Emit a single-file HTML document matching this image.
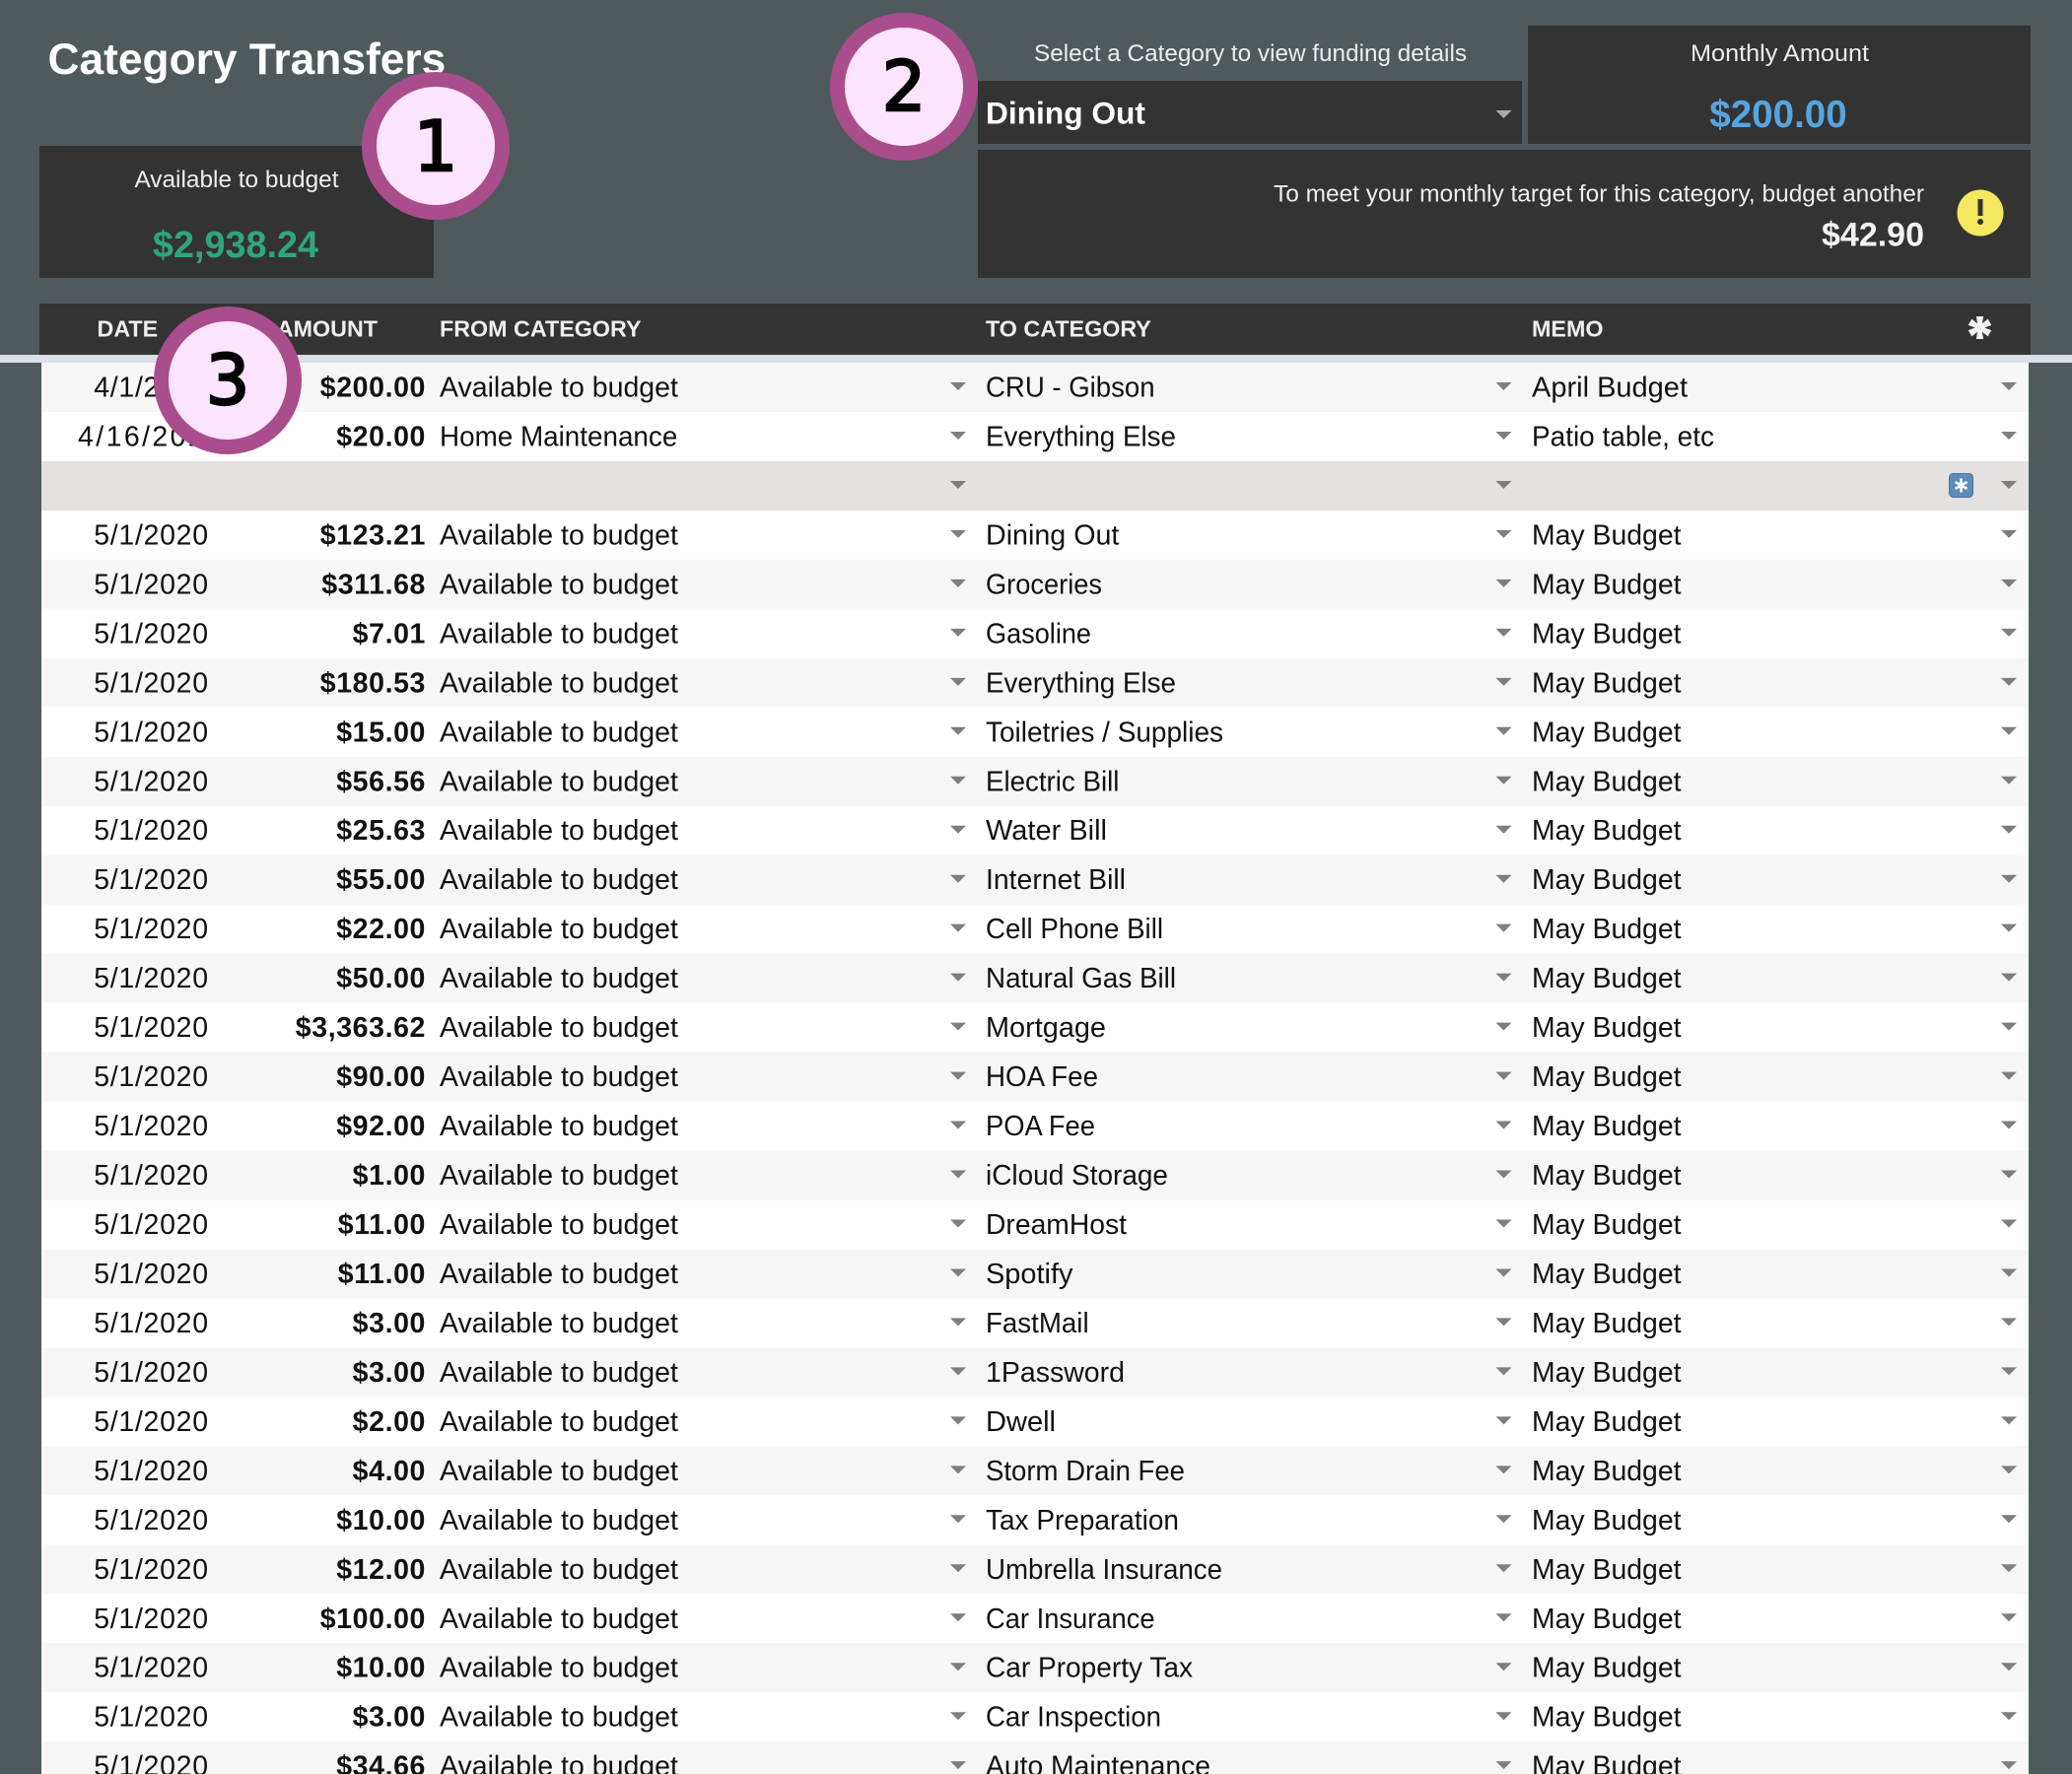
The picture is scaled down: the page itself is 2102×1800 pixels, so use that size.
<!DOCTYPE html>
<html><head><meta charset="utf-8"><title>Category Transfers</title>
<style>
html,body{margin:0;padding:0;background:#505a5d;width:2102px;height:1800px;overflow:hidden}
svg{display:block}
text{font-family:"Liberation Sans",sans-serif}
.d{font-size:28.5px;fill:#111;text-anchor:middle;letter-spacing:.7px}
.a{font-size:28.5px;fill:#111;font-weight:700;text-anchor:end;letter-spacing:.6px}
.c{font-size:28.5px;fill:#111}
.h{font-size:23.3px;fill:#eee;font-weight:700}
.l{font-size:24.4px;fill:#eee}
text.n{font-family:"DejaVu Sans",sans-serif;font-size:70px;fill:#000;stroke:#000;stroke-width:2.4px;text-anchor:middle}
</style></head><body>
<svg xmlns="http://www.w3.org/2000/svg" width="2102" height="1800" viewBox="0 0 2102 1800">
<defs>
<g id="r"><path d="M964 20h16l-8 8zM1517.500 20h16l-8 8zM2030 20h16l-8 8z" fill="#807e7c"/></g>
<path id="s" d="M-1.800 0L-3.600-11.500H3.600L1.800 0z" fill="#f2f2f2"/>
</defs>
<rect width="2102" height="1800" fill="#505a5d"/>
<text x="48.500" y="75" font-size="44.300" font-weight="700" fill="#fff">Category Transfers</text>
<rect x="40" y="148" width="400" height="134" fill="#333"/>
<text x="240" y="190" class="l" text-anchor="middle">Available to budget</text>
<text x="239" y="261" font-size="37.800" font-weight="700" fill="#2fa67c" text-anchor="middle">$2,938.24</text>
<text x="1049" y="62" class="l" textLength="439" lengthAdjust="spacingAndGlyphs">Select a Category to view funding details</text>
<rect x="992" y="82" width="552" height="64" fill="#333"/>
<text x="1000" y="125.500" font-size="31.700" font-weight="700" fill="#fff">Dining Out</text>
<path d="M1517.500 112h16l-8 8z" fill="#aaa"/>
<rect x="1550" y="26" width="510" height="120" fill="#333"/>
<text x="1715" y="62" class="l" textLength="181" lengthAdjust="spacingAndGlyphs">Monthly Amount</text>
<text x="1804" y="129" font-size="38.600" font-weight="700" fill="#55a5e0" text-anchor="middle">$200.00</text>
<rect x="992" y="152" width="1068" height="130" fill="#333"/>
<text x="1292" y="204.500" class="l" textLength="660" lengthAdjust="spacingAndGlyphs">To meet your monthly target for this category, budget another</text>
<text x="1952" y="249.500" font-size="34" font-weight="700" fill="#f2f2f2" text-anchor="end">$42.90</text>
<circle cx="2009" cy="216" r="23.500" fill="#f3e85f"/>
<path d="M2006.500 202h5v17h-5z" fill="#333"/><circle cx="2009" cy="225" r="3" fill="#333"/>
<rect x="40" y="308" width="2020" height="52" fill="#333"/>
<text x="98.500" y="341.500" class="h">DATE</text>
<text x="383" y="341.500" class="h" text-anchor="end">AMOUNT</text>
<text x="446" y="341.500" class="h">FROM CATEGORY</text>
<text x="1000" y="341.500" class="h">TO CATEGORY</text>
<text x="1554" y="341.500" class="h">MEMO</text>
<g transform="translate(2008.500,332.500)"><use href="#s"/><use href="#s" transform="rotate(60)"/><use href="#s" transform="rotate(120)"/><use href="#s" transform="rotate(180)"/><use href="#s" transform="rotate(240)"/><use href="#s" transform="rotate(300)"/></g>
<rect x="0" y="360" width="2102" height="8" fill="#dbdfe8"/>
<rect x="42" y="368" width="2016" height="1432" fill="#fff"/>

<g transform="translate(0,368)"><rect x="42" width="2016" height="50" fill="#f6f6f6"/><use href="#r"/><text x="153.500" y="34.500" class="d">4/1/2020</text><text x="432" y="34.500" class="a">$200.00</text><text x="446" y="34.500" class="c">Available to budget</text><text x="1000" y="34.500" class="c" textLength="171.600" lengthAdjust="spacingAndGlyphs">CRU - Gibson</text><text x="1554" y="34.500" class="c" textLength="158" lengthAdjust="spacingAndGlyphs">April Budget</text></g>
<g transform="translate(0,417.970)"><use href="#r"/><text x="79" y="34.500" class="d" style="text-anchor:start;letter-spacing:2.400px">4/16/2020</text><text x="432" y="34.500" class="a">$20.00</text><text x="446" y="34.500" class="c" textLength="241.300" lengthAdjust="spacingAndGlyphs">Home Maintenance</text><text x="1000" y="34.500" class="c" textLength="193" lengthAdjust="spacingAndGlyphs">Everything Else</text><text x="1554" y="34.500" class="c" textLength="185" lengthAdjust="spacingAndGlyphs">Patio table, etc</text></g>
<g transform="translate(0,467.940)"><rect x="42" width="2016" height="50" fill="#e3e2e0"/><use href="#r"/><rect x="1977.500" y="12.500" width="24" height="24" rx="4" fill="#5d8cb8" stroke="#4a7299"/><path d="M1989.500 17.500v14M1983.500 21l12 7M1983.500 28l12-7" stroke="#fff" stroke-width="2.600" fill="none"/></g>
<g transform="translate(0,517.910)"><use href="#r"/><text x="153.500" y="34.500" class="d">5/1/2020</text><text x="432" y="34.500" class="a">$123.21</text><text x="446" y="34.500" class="c">Available to budget</text><text x="1000" y="34.500" class="c" textLength="135.400" lengthAdjust="spacingAndGlyphs">Dining Out</text><text x="1554" y="34.500" class="c" textLength="151.500" lengthAdjust="spacingAndGlyphs">May Budget</text></g>
<g transform="translate(0,567.880)"><rect x="42" width="2016" height="50" fill="#f6f6f6"/><use href="#r"/><text x="153.500" y="34.500" class="d">5/1/2020</text><text x="432" y="34.500" class="a">$311.68</text><text x="446" y="34.500" class="c">Available to budget</text><text x="1000" y="34.500" class="c" textLength="118" lengthAdjust="spacingAndGlyphs">Groceries</text><text x="1554" y="34.500" class="c" textLength="151.500" lengthAdjust="spacingAndGlyphs">May Budget</text></g>
<g transform="translate(0,617.850)"><use href="#r"/><text x="153.500" y="34.500" class="d">5/1/2020</text><text x="432" y="34.500" class="a">$7.01</text><text x="446" y="34.500" class="c">Available to budget</text><text x="1000" y="34.500" class="c" textLength="107" lengthAdjust="spacingAndGlyphs">Gasoline</text><text x="1554" y="34.500" class="c" textLength="151.500" lengthAdjust="spacingAndGlyphs">May Budget</text></g>
<g transform="translate(0,667.820)"><rect x="42" width="2016" height="50" fill="#f6f6f6"/><use href="#r"/><text x="153.500" y="34.500" class="d">5/1/2020</text><text x="432" y="34.500" class="a">$180.53</text><text x="446" y="34.500" class="c">Available to budget</text><text x="1000" y="34.500" class="c" textLength="193" lengthAdjust="spacingAndGlyphs">Everything Else</text><text x="1554" y="34.500" class="c" textLength="151.500" lengthAdjust="spacingAndGlyphs">May Budget</text></g>
<g transform="translate(0,717.790)"><use href="#r"/><text x="153.500" y="34.500" class="d">5/1/2020</text><text x="432" y="34.500" class="a">$15.00</text><text x="446" y="34.500" class="c">Available to budget</text><text x="1000" y="34.500" class="c" textLength="241" lengthAdjust="spacingAndGlyphs">Toiletries / Supplies</text><text x="1554" y="34.500" class="c" textLength="151.500" lengthAdjust="spacingAndGlyphs">May Budget</text></g>
<g transform="translate(0,767.760)"><rect x="42" width="2016" height="50" fill="#f6f6f6"/><use href="#r"/><text x="153.500" y="34.500" class="d">5/1/2020</text><text x="432" y="34.500" class="a">$56.56</text><text x="446" y="34.500" class="c">Available to budget</text><text x="1000" y="34.500" class="c" textLength="135.400" lengthAdjust="spacingAndGlyphs">Electric Bill</text><text x="1554" y="34.500" class="c" textLength="151.500" lengthAdjust="spacingAndGlyphs">May Budget</text></g>
<g transform="translate(0,817.730)"><use href="#r"/><text x="153.500" y="34.500" class="d">5/1/2020</text><text x="432" y="34.500" class="a">$25.63</text><text x="446" y="34.500" class="c">Available to budget</text><text x="1000" y="34.500" class="c" textLength="123" lengthAdjust="spacingAndGlyphs">Water Bill</text><text x="1554" y="34.500" class="c" textLength="151.500" lengthAdjust="spacingAndGlyphs">May Budget</text></g>
<g transform="translate(0,867.700)"><rect x="42" width="2016" height="50" fill="#f6f6f6"/><use href="#r"/><text x="153.500" y="34.500" class="d">5/1/2020</text><text x="432" y="34.500" class="a">$55.00</text><text x="446" y="34.500" class="c">Available to budget</text><text x="1000" y="34.500" class="c" textLength="142" lengthAdjust="spacingAndGlyphs">Internet Bill</text><text x="1554" y="34.500" class="c" textLength="151.500" lengthAdjust="spacingAndGlyphs">May Budget</text></g>
<g transform="translate(0,917.670)"><use href="#r"/><text x="153.500" y="34.500" class="d">5/1/2020</text><text x="432" y="34.500" class="a">$22.00</text><text x="446" y="34.500" class="c">Available to budget</text><text x="1000" y="34.500" class="c" textLength="180" lengthAdjust="spacingAndGlyphs">Cell Phone Bill</text><text x="1554" y="34.500" class="c" textLength="151.500" lengthAdjust="spacingAndGlyphs">May Budget</text></g>
<g transform="translate(0,967.640)"><rect x="42" width="2016" height="50" fill="#f6f6f6"/><use href="#r"/><text x="153.500" y="34.500" class="d">5/1/2020</text><text x="432" y="34.500" class="a">$50.00</text><text x="446" y="34.500" class="c">Available to budget</text><text x="1000" y="34.500" class="c" textLength="193" lengthAdjust="spacingAndGlyphs">Natural Gas Bill</text><text x="1554" y="34.500" class="c" textLength="151.500" lengthAdjust="spacingAndGlyphs">May Budget</text></g>
<g transform="translate(0,1017.610)"><use href="#r"/><text x="153.500" y="34.500" class="d">5/1/2020</text><text x="432" y="34.500" class="a">$3,363.62</text><text x="446" y="34.500" class="c">Available to budget</text><text x="1000" y="34.500" class="c" textLength="122" lengthAdjust="spacingAndGlyphs">Mortgage</text><text x="1554" y="34.500" class="c" textLength="151.500" lengthAdjust="spacingAndGlyphs">May Budget</text></g>
<g transform="translate(0,1067.580)"><rect x="42" width="2016" height="50" fill="#f6f6f6"/><use href="#r"/><text x="153.500" y="34.500" class="d">5/1/2020</text><text x="432" y="34.500" class="a">$90.00</text><text x="446" y="34.500" class="c">Available to budget</text><text x="1000" y="34.500" class="c" textLength="114" lengthAdjust="spacingAndGlyphs">HOA Fee</text><text x="1554" y="34.500" class="c" textLength="151.500" lengthAdjust="spacingAndGlyphs">May Budget</text></g>
<g transform="translate(0,1117.550)"><use href="#r"/><text x="153.500" y="34.500" class="d">5/1/2020</text><text x="432" y="34.500" class="a">$92.00</text><text x="446" y="34.500" class="c">Available to budget</text><text x="1000" y="34.500" class="c" textLength="111" lengthAdjust="spacingAndGlyphs">POA Fee</text><text x="1554" y="34.500" class="c" textLength="151.500" lengthAdjust="spacingAndGlyphs">May Budget</text></g>
<g transform="translate(0,1167.520)"><rect x="42" width="2016" height="50" fill="#f6f6f6"/><use href="#r"/><text x="153.500" y="34.500" class="d">5/1/2020</text><text x="432" y="34.500" class="a">$1.00</text><text x="446" y="34.500" class="c">Available to budget</text><text x="1000" y="34.500" class="c" textLength="185" lengthAdjust="spacingAndGlyphs">iCloud Storage</text><text x="1554" y="34.500" class="c" textLength="151.500" lengthAdjust="spacingAndGlyphs">May Budget</text></g>
<g transform="translate(0,1217.490)"><use href="#r"/><text x="153.500" y="34.500" class="d">5/1/2020</text><text x="432" y="34.500" class="a">$11.00</text><text x="446" y="34.500" class="c">Available to budget</text><text x="1000" y="34.500" class="c" textLength="143" lengthAdjust="spacingAndGlyphs">DreamHost</text><text x="1554" y="34.500" class="c" textLength="151.500" lengthAdjust="spacingAndGlyphs">May Budget</text></g>
<g transform="translate(0,1267.460)"><rect x="42" width="2016" height="50" fill="#f6f6f6"/><use href="#r"/><text x="153.500" y="34.500" class="d">5/1/2020</text><text x="432" y="34.500" class="a">$11.00</text><text x="446" y="34.500" class="c">Available to budget</text><text x="1000" y="34.500" class="c" textLength="88.500" lengthAdjust="spacingAndGlyphs">Spotify</text><text x="1554" y="34.500" class="c" textLength="151.500" lengthAdjust="spacingAndGlyphs">May Budget</text></g>
<g transform="translate(0,1317.430)"><use href="#r"/><text x="153.500" y="34.500" class="d">5/1/2020</text><text x="432" y="34.500" class="a">$3.00</text><text x="446" y="34.500" class="c">Available to budget</text><text x="1000" y="34.500" class="c" textLength="104.600" lengthAdjust="spacingAndGlyphs">FastMail</text><text x="1554" y="34.500" class="c" textLength="151.500" lengthAdjust="spacingAndGlyphs">May Budget</text></g>
<g transform="translate(0,1367.400)"><rect x="42" width="2016" height="50" fill="#f6f6f6"/><use href="#r"/><text x="153.500" y="34.500" class="d">5/1/2020</text><text x="432" y="34.500" class="a">$3.00</text><text x="446" y="34.500" class="c">Available to budget</text><text x="1000" y="34.500" class="c" textLength="141" lengthAdjust="spacingAndGlyphs">1Password</text><text x="1554" y="34.500" class="c" textLength="151.500" lengthAdjust="spacingAndGlyphs">May Budget</text></g>
<g transform="translate(0,1417.370)"><use href="#r"/><text x="153.500" y="34.500" class="d">5/1/2020</text><text x="432" y="34.500" class="a">$2.00</text><text x="446" y="34.500" class="c">Available to budget</text><text x="1000" y="34.500" class="c" textLength="71" lengthAdjust="spacingAndGlyphs">Dwell</text><text x="1554" y="34.500" class="c" textLength="151.500" lengthAdjust="spacingAndGlyphs">May Budget</text></g>
<g transform="translate(0,1467.340)"><rect x="42" width="2016" height="50" fill="#f6f6f6"/><use href="#r"/><text x="153.500" y="34.500" class="d">5/1/2020</text><text x="432" y="34.500" class="a">$4.00</text><text x="446" y="34.500" class="c">Available to budget</text><text x="1000" y="34.500" class="c" textLength="202" lengthAdjust="spacingAndGlyphs">Storm Drain Fee</text><text x="1554" y="34.500" class="c" textLength="151.500" lengthAdjust="spacingAndGlyphs">May Budget</text></g>
<g transform="translate(0,1517.310)"><use href="#r"/><text x="153.500" y="34.500" class="d">5/1/2020</text><text x="432" y="34.500" class="a">$10.00</text><text x="446" y="34.500" class="c">Available to budget</text><text x="1000" y="34.500" class="c" textLength="196" lengthAdjust="spacingAndGlyphs">Tax Preparation</text><text x="1554" y="34.500" class="c" textLength="151.500" lengthAdjust="spacingAndGlyphs">May Budget</text></g>
<g transform="translate(0,1567.280)"><rect x="42" width="2016" height="50" fill="#f6f6f6"/><use href="#r"/><text x="153.500" y="34.500" class="d">5/1/2020</text><text x="432" y="34.500" class="a">$12.00</text><text x="446" y="34.500" class="c">Available to budget</text><text x="1000" y="34.500" class="c" textLength="240" lengthAdjust="spacingAndGlyphs">Umbrella Insurance</text><text x="1554" y="34.500" class="c" textLength="151.500" lengthAdjust="spacingAndGlyphs">May Budget</text></g>
<g transform="translate(0,1617.250)"><use href="#r"/><text x="153.500" y="34.500" class="d">5/1/2020</text><text x="432" y="34.500" class="a">$100.00</text><text x="446" y="34.500" class="c">Available to budget</text><text x="1000" y="34.500" class="c" textLength="171.600" lengthAdjust="spacingAndGlyphs">Car Insurance</text><text x="1554" y="34.500" class="c" textLength="151.500" lengthAdjust="spacingAndGlyphs">May Budget</text></g>
<g transform="translate(0,1667.220)"><rect x="42" width="2016" height="50" fill="#f6f6f6"/><use href="#r"/><text x="153.500" y="34.500" class="d">5/1/2020</text><text x="432" y="34.500" class="a">$10.00</text><text x="446" y="34.500" class="c">Available to budget</text><text x="1000" y="34.500" class="c" textLength="210" lengthAdjust="spacingAndGlyphs">Car Property Tax</text><text x="1554" y="34.500" class="c" textLength="151.500" lengthAdjust="spacingAndGlyphs">May Budget</text></g>
<g transform="translate(0,1717.190)"><use href="#r"/><text x="153.500" y="34.500" class="d">5/1/2020</text><text x="432" y="34.500" class="a">$3.00</text><text x="446" y="34.500" class="c">Available to budget</text><text x="1000" y="34.500" class="c" textLength="178" lengthAdjust="spacingAndGlyphs">Car Inspection</text><text x="1554" y="34.500" class="c" textLength="151.500" lengthAdjust="spacingAndGlyphs">May Budget</text></g>
<g transform="translate(0,1767.160)"><rect x="42" width="2016" height="50" fill="#f6f6f6"/><use href="#r"/><text x="153.500" y="34.500" class="d">5/1/2020</text><text x="432" y="34.500" class="a">$34.66</text><text x="446" y="34.500" class="c">Available to budget</text><text x="1000" y="34.500" class="c" textLength="228" lengthAdjust="spacingAndGlyphs">Auto Maintenance</text><text x="1554" y="34.500" class="c" textLength="151.500" lengthAdjust="spacingAndGlyphs">May Budget</text></g>

<circle cx="442" cy="148" r="67.500" fill="#fce4ff" stroke="#aa4d8c" stroke-width="15"/>
<text x="442" y="173" class="n">1</text>
<circle cx="917" cy="88" r="67.500" fill="#fce4ff" stroke="#aa4d8c" stroke-width="15"/>
<text x="917" y="112" class="n">2</text>
<circle cx="231" cy="386" r="67.500" fill="#fce4ff" stroke="#aa4d8c" stroke-width="15"/>
<text x="231" y="410" class="n">3</text>
</svg>
</body></html>
